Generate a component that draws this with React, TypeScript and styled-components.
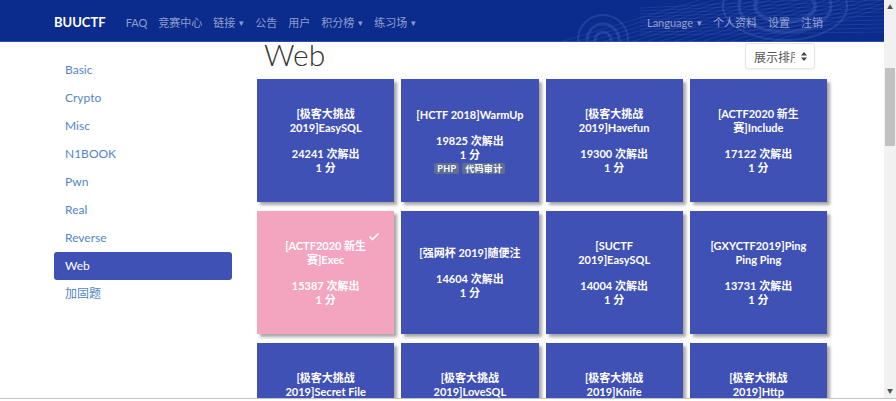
import styled, {createGlobalStyle} from "styled-components";
import {Check} from "lucide-react";

const GlobalStyle = createGlobalStyle`
  html, body {
    margin: 0;
    padding: 0;
    background: #fff;
    overflow: hidden;
  }
  body {
    font-family: Lato, "Noto Sans CJK SC", sans-serif;
  }
`

type Challenge = {
    title: string;
    solves: number;
    tags?: string[];
    solved?: boolean;
}

const categories = ['Basic', 'Crypto', 'Misc', 'N1BOOK', 'Pwn', 'Real', 'Reverse', 'Web', '加固题'];

const challenges: Challenge[] = [
    {title: '[极客大挑战 2019]EasySQL', solves: 24241},
    {title: '[HCTF 2018]WarmUp', solves: 19825, tags: ['PHP', '代码审计']},
    {title: '[极客大挑战 2019]Havefun', solves: 19300},
    {title: '[ACTF2020 新生赛]Include', solves: 17122},
    {title: '[ACTF2020 新生赛]Exec', solves: 15387, solved: true},
    {title: '[强网杯 2019]随便注', solves: 14604},
    {title: '[SUCTF 2019]EasySQL', solves: 14004},
    {title: '[GXYCTF2019]Ping Ping Ping', solves: 13731},
    {title: '[极客大挑战 2019]Secret File', solves: 13412},
    {title: '[极客大挑战 2019]LoveSQL', solves: 12960},
    {title: '[极客大挑战 2019]Knife', solves: 12533},
    {title: '[极客大挑战 2019]Http', solves: 12247},
];

const Caret = () => <CaretMark>▾</CaretMark>;

// faint rings and streaks printed on the right part of the navbar
const NavDecoration = () => (
    <Decor width="884" height="42" viewBox="0 0 884 42">
        <g fill="none" stroke="#5a78c8" strokeOpacity="0.28">
            <circle cx="603" cy="40" r="8" strokeWidth="3"/>
            <circle cx="603" cy="40" r="16" strokeWidth="3"/>
            <circle cx="603" cy="40" r="25" strokeWidth="2"/>
            <ellipse cx="785" cy="6" rx="30" ry="16" strokeWidth="4"/>
            <ellipse cx="785" cy="6" rx="46" ry="26" strokeWidth="3"/>
            <ellipse cx="785" cy="6" rx="62" ry="34" strokeWidth="2"/>
        </g>
        <g stroke="#6d88d2" strokeOpacity="0.18" strokeWidth="1">
            {Array.from({length: 16}).map((_, i) => (
                <line key={i} x1={560 + i * 14} y1={42} x2={700 + i * 14} y2={0}/>
            ))}
            {Array.from({length: 10}).map((_, i) => (
                <line key={'h' + i} x1={640} y1={8 + i * 3} x2={884} y2={-4 + i * 4}/>
            ))}
        </g>
    </Decor>
);

const ChallengeCard = ({c}: { c: Challenge }) => (
    <Card $solved={c.solved}>
        {c.solved && <Solved><Check size={12} strokeWidth={3.5}/></Solved>}
        <Title>{c.title}</Title>
        <Stats>
            <div>{c.solves} 次解出</div>
            <div>1 分</div>
            {c.tags && (
                <Tags>
                    {c.tags.map(t => <Tag key={t}>{t}</Tag>)}
                </Tags>
            )}
        </Stats>
    </Card>
);

const App = () => {
    return (
        <>
            <GlobalStyle/>
            <Screen>
                <Viewport>
                    <Page>
                        <Navbar>
                            <NavDecoration/>
                            <Brand>BUUCTF</Brand>
                            <NavLinks>
                                <NavItem>FAQ</NavItem>
                                <NavItem>竞赛中心</NavItem>
                                <NavItem>链接<Caret/></NavItem>
                                <NavItem>公告</NavItem>
                                <NavItem>用户</NavItem>
                                <NavItem>积分榜<Caret/></NavItem>
                                <NavItem>练习场<Caret/></NavItem>
                            </NavLinks>
                            <NavRight>
                                <NavItem>Language<Caret/></NavItem>
                                <NavItem>个人资料</NavItem>
                                <NavItem>设置</NavItem>
                                <NavItem>注销</NavItem>
                            </NavRight>
                        </Navbar>
                        <Content>
                            <Sidebar>
                                {categories.map(cat => (
                                    <SideItem key={cat} $active={cat === 'Web'}>{cat}</SideItem>
                                ))}
                            </Sidebar>
                            <Main>
                                <HeaderRow>
                                    <Heading>Web</Heading>
                                    <SortSelect>
                                        <SortText>展示排序</SortText>
                                        <svg width="6" height="9" viewBox="0 0 6 9">
                                            <path d="M3 0 L6 3.5 L0 3.5 Z M3 9 L6 5.5 L0 5.5 Z" fill="#444"/>
                                        </svg>
                                    </SortSelect>
                                </HeaderRow>
                                <Grid>
                                    {challenges.map(c => <ChallengeCard key={c.title} c={c}/>)}
                                </Grid>
                            </Main>
                        </Content>
                    </Page>
                    <ScrollTrack>
                        <ScrollArrow>▲</ScrollArrow>
                        <ScrollThumb/>
                        <ScrollArrow>▼</ScrollArrow>
                    </ScrollTrack>
                </Viewport>
                <BottomEdge/>
            </Screen>
        </>
    );
}

const Screen = styled.div`
  width: 896px;
  height: 401px;
  display: flex;
  flex-direction: column;
`

const Viewport = styled.div`
  height: 398px;
  display: flex;
`

const BottomEdge = styled.div`
  flex: 1;
  border-top: 1px solid #c4c4c4;
  background: #fff;
`

const Page = styled.div`
  width: 884px;
  overflow: hidden;
`

const ScrollTrack = styled.div`
  width: 12px;
  background: #f1f1f1;
  display: flex;
  flex-direction: column;
  align-items: center;
  justify-content: space-between;
  position: relative;
`

const ScrollArrow = styled.span`
  font-size: 6px;
  color: #505050;
  line-height: 14px;
  height: 14px;
`

const ScrollThumb = styled.div`
  position: absolute;
  top: 68px;
  left: 1px;
  width: 10px;
  height: 78px;
  background: #c1c1c1;
`

const Navbar = styled.nav`
  position: relative;
  height: 42px;
  box-sizing: border-box;
  padding: 3px 54px 0;
  border-bottom: 1px solid #2f4fa8;
  background: #0b2b8d;
  display: flex;
  align-items: center;
  overflow: hidden;
`

const Decor = styled.svg`
  position: absolute;
  left: 0;
  top: 0;
`

const Brand = styled.span`
  position: relative;
  color: #fff;
  font-size: 13px;
  font-weight: 700;
  margin-right: 20px;
`

const NavLinks = styled.div`
  position: relative;
  display: flex;
  gap: 11px;
  flex: 1;
`

const NavRight = styled.div`
  position: relative;
  display: flex;
  gap: 11px;
  margin-right: 7px;
`

const NavItem = styled.span`
  color: rgba(255, 255, 255, 0.55);
  font-size: 11px;
  display: flex;
  align-items: center;
`

const CaretMark = styled.span`
  font-size: 9px;
  margin-left: 4px;
`

const Content = styled.div`
  display: grid;
  grid-template-columns: 178px 570px;
  gap: 25px;
  padding-left: 54px;
`

const Sidebar = styled.ul`
  list-style: none;
  margin: 14px 0 0;
  padding: 0;
`

const SideItem = styled.li<{ $active?: boolean }>`
  height: 28px;
  line-height: 28px;
  padding-left: 11px;
  font-size: 12px;
  border-radius: 3px;
  color: ${p => p.$active ? '#fff' : '#5286c4'};
  background: ${p => p.$active ? '#3f51b5' : 'transparent'};
`

const Main = styled.main`
  display: flex;
  flex-direction: column;
`

const HeaderRow = styled.div`
  height: 37px;
  display: flex;
  justify-content: space-between;
  align-items: flex-start;
`

const Heading = styled.h1`
  margin: 0 0 0 7px;
  font-size: 30px;
  font-weight: 300;
  line-height: 24px;
  color: #333;
`

const SortSelect = styled.div`
  margin: 1px 12px 0 0;
  width: 70px;
  height: 26px;
  box-sizing: border-box;
  border: 1px solid #e6e6e6;
  border-radius: 3px;
  background: #fff;
  box-shadow: 0 1px 2px rgba(0, 0, 0, 0.06);
  display: flex;
  align-items: center;
  gap: 6px;
  padding-left: 8px;
`

const SortText = styled.span`
  width: 41px;
  overflow: hidden;
  white-space: nowrap;
  font-size: 12px;
  color: #555;
`

const Grid = styled.div`
  display: grid;
  grid-template-columns: repeat(4, 1fr);
  column-gap: 7px;
  row-gap: 9px;
`

const Card = styled.div<{ $solved?: boolean }>`
  position: relative;
  height: 123px;
  box-sizing: border-box;
  padding: 0 14px;
  background: ${p => p.$solved ? '#f3a5c0' : '#3f51b5'};
  box-shadow: 3px 3px 3px rgba(0, 0, 0, 0.35);
  color: #fff;
  font-size: 11px;
  font-weight: 700;
  line-height: 14px;
  text-align: center;
  display: flex;
  flex-direction: column;
  justify-content: center;
  gap: 12px;
`

const Solved = styled.span`
  position: absolute;
  top: 20px;
  right: 14px;
  color: #fff;
  display: flex;
`

const Title = styled.div``

const Stats = styled.div``

const Tags = styled.div`
  display: flex;
  justify-content: center;
  gap: 3px;
  margin-top: 1px;
`

const Tag = styled.span`
  background: #5f6f93;
  border-radius: 2px;
  font-size: 9px;
  line-height: 11px;
  padding: 0 3px;
  letter-spacing: 0.3px;
`

export default App
